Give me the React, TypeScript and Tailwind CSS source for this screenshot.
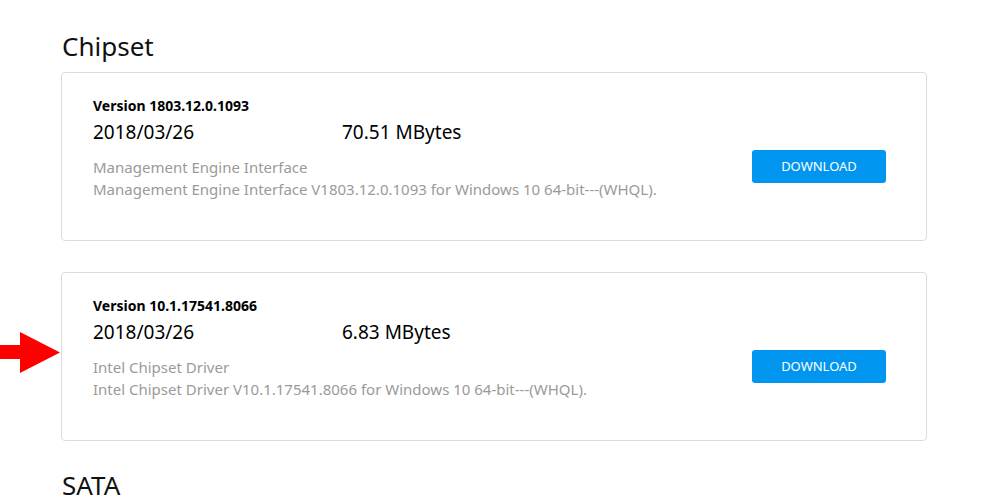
const DRIVERS = [
  {
    version: '1803.12.0.1093',
    date: '2018/03/26',
    size: '70.51 MBytes',
    name: 'Management Engine Interface',
    desc: 'Management Engine Interface V1803.12.0.1093 for Windows 10 64-bit---(WHQL).',
  },
  {
    version: '10.1.17541.8066',
    date: '2018/03/26',
    size: '6.83 MBytes',
    name: 'Intel Chipset Driver',
    desc: 'Intel Chipset Driver V10.1.17541.8066 for Windows 10 64-bit---(WHQL).',
  },
];

function DriverCard({ d }: { d: (typeof DRIVERS)[number] }) {
  return (
    <div className="flex items-start justify-between rounded-[4px] border border-[#dcdcdc] bg-white pl-[31px] pr-[40px] pt-[23px] pb-[40px]">
      <div>
        <p className="text-[14px] font-bold leading-[20px] text-black">Version {d.version}</p>
        <div className="mt-[4px] flex text-[19px] leading-[24px] text-black">
          <span className="w-[249px]">{d.date}</span>
          <span>{d.size}</span>
        </div>
        <div className="mt-[12px] text-[15px] leading-[22px] text-[#9a9a9a]">
          <p>{d.name}</p>
          <p>{d.desc}</p>
        </div>
      </div>
      <button className="mt-[54px] h-[33px] w-[134px] rounded-[3px] bg-[#0096f0] text-[13px] text-white">
        DOWNLOAD
      </button>
    </div>
  );
}

export default function App() {
  return (
    <div
      className="relative h-[503px] w-[989px] overflow-hidden bg-white"
      style={{ fontFamily: '"Segoe UI", "Noto Sans", sans-serif' }}
    >
      <div className="w-[866px] pl-[61px] box-content pt-[28px]">
        <h2 className="pl-[1px] text-[26px] leading-[36px] text-[#111]">Chipset</h2>
        <div className="mt-[8px] flex flex-col gap-[31px]">
          {DRIVERS.map(d => (
            <DriverCard key={d.version} d={d} />
          ))}
        </div>
        <h2 className="mt-[26px] pl-[1px] text-[26px] leading-[36px] text-[#111]">SATA</h2>
      </div>

      {/* red arrow pointing at the second card */}
      <svg className="absolute left-0 top-[332px]" width="62" height="41" viewBox="0 0 62 41">
        <rect x="0" y="13" width="24" height="14" fill="#ff0000" />
        <polygon points="20,0 60,20.5 20,41" fill="#ff0000" />
      </svg>
    </div>
  );
}
